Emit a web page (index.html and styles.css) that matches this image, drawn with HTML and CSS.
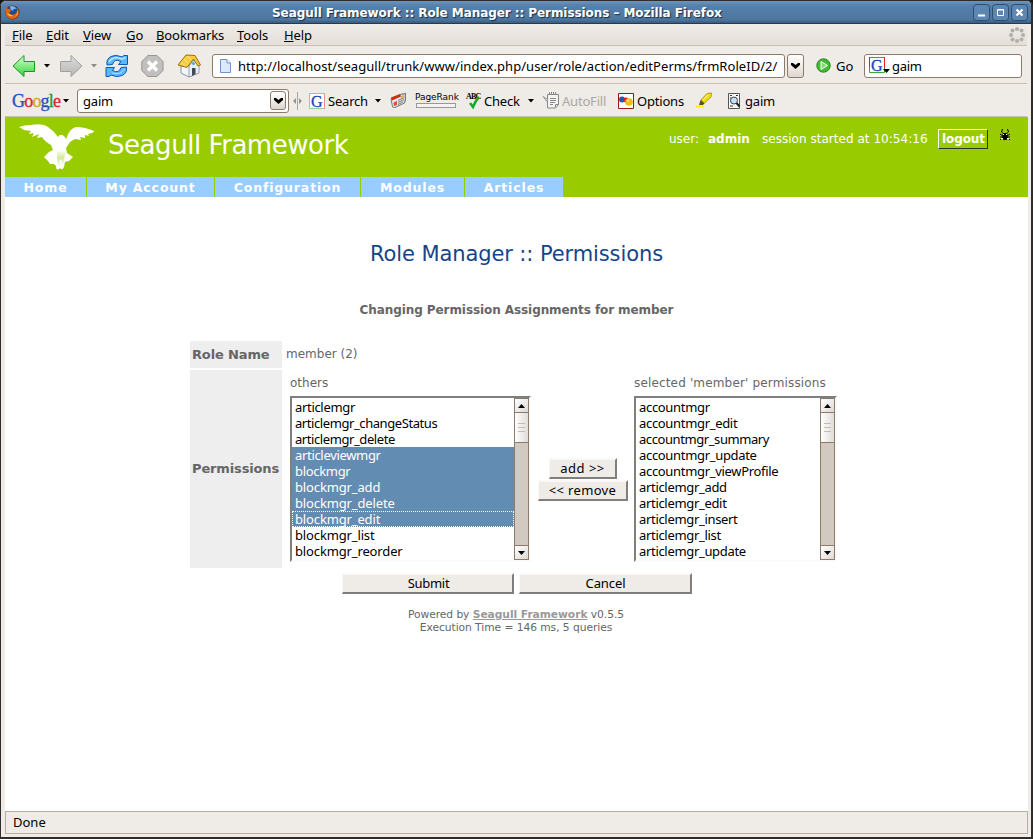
FILE: index.html
```html
<!DOCTYPE html>
<html lang="en">
<head>
<meta charset="utf-8">
<title>Seagull Framework :: Role Manager :: Permissions - Mozilla Firefox</title>
<link rel="stylesheet" href="styles.css">
</head>
<body>
<div class="window">
  <header class="titlebar">
    <svg class="fox" width="15" height="15" viewBox="0 0 15 15"><circle cx="7.500" cy="7.500" r="7" fill="#732b08"/><circle cx="7.800" cy="6.400" r="5.400" fill="#1f4a97"/><path d="M5 1.500Q9 0 12 4Q8 3 8 6Q5 5 5 1.500" fill="#78b9ec"/><path d="M1 2L3 4L5 4L6 6L4 8Q6 11 10 9Q13 7 12 3Q16 9 11 13Q5 16 1 10Q0 6 1 2" fill="#e5600d"/><path d="M12 3Q15 9 10 12Q14 7 12 3M2 8Q4 12 8 11" fill="#ffd23c"/></svg>
    <h1 class="titletext">Seagull Framework :: Role Manager :: Permissions – Mozilla Firefox</h1>
    <div class="winbtns">
      <svg width="17" height="17"><rect x=".5" y=".5" width="16" height="16" rx="3" class="wb"/><path d="M5 11.500h7" stroke="#fff" stroke-width="2"/></svg>
      <svg width="17" height="17"><rect x=".5" y=".5" width="16" height="16" rx="3" class="wb"/><path d="M5.500 5.500h6v6h-6zM5 6h7" stroke="#fff" fill="none"/></svg>
      <svg width="17" height="17"><rect x=".5" y=".5" width="16" height="16" rx="3" class="wb"/><path d="M5.500 5.500l6 6m0-6l-6 6" stroke="#fff" stroke-width="2.200"/></svg>
    </div>
  </header>
  <nav class="menubar">
    <span><u>F</u>ile</span><span><u>E</u>dit</span><span><u>V</u>iew</span><span><u>G</u>o</span><span><u>B</u>ookmarks</span><span><u>T</u>ools</span><span><u>H</u>elp</span>
    <svg width="18" height="18" fill="#b2afaa"><circle cx="9" cy="3" r="2"/><circle cx="13.500" cy="4.500" r="2"/><circle cx="15" cy="9" r="2"/><circle cx="13.500" cy="13.500" r="2"/><circle cx="9" cy="15" r="2"/><circle cx="4.500" cy="13.500" r="2"/><circle cx="3" cy="9" r="2"/><circle cx="4.500" cy="4.500" r="2"/></svg>
  </nav>
  <div class="navbar">
    <svg width="24" height="24"><defs><linearGradient id="gr" x2="0" y2="1"><stop stop-color="#d8ffd0"/><stop offset="1" stop-color="#35d53a"/></linearGradient><linearGradient id="gy" x2="0" y2="1"><stop stop-color="#dedddd"/><stop offset="1" stop-color="#b6b4b3"/></linearGradient></defs><path d="M1 12L12 1.500V7.500H22.500V17.500H12V22.500Z" fill="url(#gr)" stroke="#149b1c"/></svg>
    <svg width="6" height="4"><path d="M0 0h6L3 3.500z"/></svg>
    <svg width="24" height="24"><path d="M22 12L11 1.500V7.500H.5V17.500H11V22.500Z" fill="url(#gy)" stroke="#a3a19f"/></svg>
    <svg width="6" height="4"><path d="M0 0h6L3 3.500z" fill="#8d8a87"/></svg>
    <svg width="24" height="24" fill="#5bb9fb" stroke="#0759b8"><path d="M2 11Q1 5 6 2.500Q11 0 17 3L19 1.500H22.500V10.500H13.500L16 7.500Q9 4 7.500 10.500Z"/><path d="M21.500 13Q22.500 19 17 21.500Q12 24 6 21L4 22.500H1V13.500H9.500L7.500 16.500Q14 20 16 13.500Z"/><path d="M4 8Q8 1.500 17 5L20.500 3.500" fill="none" stroke="#b9e5ff" stroke-width="1.500"/><path d="M19.500 15Q16 21.500 7 19" fill="none" stroke="#a9dfff"/></svg>
    <svg width="23" height="24"><path d="M7 1.500H16L22 7.500V16.500L16 22.500H7L.8 16.500V7.500Z" fill="#c1c0bf" stroke="#989695"/><path d="M7 7.500l9 9m0-9l-9 9" stroke="#fff" stroke-width="3.500"/></svg>
    <svg width="25" height="25"><path d="M4 13L13 8L21 13V20L12 24L4 20Z" fill="#f4f6fb" stroke="#8b91a0"/><path d="M12 24V13L17 7L22 13V20L12 24Z" fill="#e7effa" stroke="#999eaa"/><path d="M1 12L9 2L18 2.500L23.500 12L21 13L16.500 6L10 14.500Z" fill="#f4cd43" stroke="#9a6d09"/><path d="M7 6L11 10M4 9L8 13M10 3L14 7" stroke="#ffe988"/><path d="M15 15h3.500v6l-3.500 2z" fill="#414956"/><circle cx="16.500" cy="10.500" r="1.500" fill="#4caadd"/></svg>
    <div class="field url"><svg width="13" height="16"><path d="M1.500 1.500H8L11.500 5V14.500H1.500Z" fill="#dbe9ff" stroke="#7591c8"/><path d="M8 1.500V5H11.500" fill="#fff" stroke="#7591c8"/></svg><span>http://localhost/seagull/trunk/www/index.php/user/role/action/editPerms/frmRoleID/2/</span></div>
    <div class="drop tall"><svg width="9" height="6"><path d="M0 0H2L4.500 2L7 0H9V2L4.500 6L0 2Z"/></svg></div>
    <svg width="15" height="15"><circle cx="7.500" cy="7.500" r="6.700" fill="#45ba37" stroke="#23881e"/><path d="M5 3.500L11.500 7.500L5 11.500Z" fill="#7fdc70" stroke="#fff"/></svg>
    <span>Go</span>
    <div class="field find"><svg width="21" height="19"><g transform="translate(0 1)"><path d="M.5.5h15v15H.5z" fill="#fff" stroke="#36a936"/><path d="M15.500 0v11" stroke="#e22"/><path d="M.5 0v10" stroke="#35c"/><text x="2" y="13.500" class="g">G</text><path d="M14 12h7l-3.500 4z"/></g></svg><span>gaim</span></div>
  </div>
  <div class="googlebar">
    <span class="glogo"><i class="b">G</i><i class="r">o</i><i class="y">o</i><i class="b">g</i><i class="gn">l</i><i class="r">e</i></span>
    <svg width="6" height="4"><path d="M0 0h6L3 3.500z"/></svg>
    <div class="field combo"><span>gaim</span><div class="drop"><svg width="9" height="6"><path d="M0 0H2L4.500 2L7 0H9V2L4.500 6L0 2Z"/></svg></div></div>
    <svg width="10" height="18"><path d="M4.500 0v18" stroke="#aaa7a3"/><path d="M0 9L3 6v6zM9 9L6 6v6z" fill="#96938f"/></svg>
    <svg width="16" height="20"><g transform="translate(0 2)"><path d="M.5.5h15v15H.5z" fill="#fff" stroke="#92cf96"/><path d="M15.500 0v16" stroke="#ef9090"/><path d="M0 .5h16" stroke="#92b9ec"/><text x="2" y="13.500" class="g">G</text></g></svg>
    <span>Search</span>
    <svg width="6" height="4"><path d="M0 0h6L3 3.500z"/></svg>
    <svg width="17" height="17"><path d="M1 6.500L13 1.500L14.500 11L5 15.500L2.500 15Z" fill="#e8e8e8" stroke="#777"/><path d="M13 2.500L15.500 1V8L14.500 11" fill="#ccc" stroke="#777"/><path d="M1 5.500L10 2L11 4.500L2 8.500Z" fill="#d52a16"/><path d="M3.500 10.500l3.500-1.500v4l-3 1z" fill="#e34a35"/><path d="M8 8.500l5-2.500M8 10.500l5-2.500M8 12.500l5-2.500" stroke="#777"/><path d="M11 4l2-1v2l-2 1z" fill="#e8b020"/></svg>
    <span class="rank"><b>PageRank</b><i></i></span>
    <svg width="16" height="17"><text x="0" y="7" class="abc" textLength="15">ABC</text><path d="M4 11L7 15Q10 8 13 5" stroke="#17a92f" stroke-width="2.500" fill="none"/></svg>
    <span>Check</span>
    <svg width="6" height="4"><path d="M0 0h6L3 3.500z"/></svg>
    <svg width="17" height="17"><path d="M4.500 2.500h11v10l-3 3.500h-8z" fill="#f4f3f2" stroke="#888"/><path d="M6.500 0v3M8.500 0v3M10.500 0v3M12.500 0v3M7 6.500h6M7 8.500h6M7 10.500h5M7 12.500h3M12.500 15.500v-3h3" stroke="#888" fill="none"/><path d="M0 4.500l4 5 .5-2z" fill="#ddd" stroke="#999"/></svg>
    <span class="off">AutoFill</span>
    <svg width="16" height="16"><path d="M.5.5h15v15H.5z" fill="#fff" stroke="#9b1717"/><circle cx="4" cy="6.500" r="3" fill="#2457b1"/><circle cx="8" cy="7" r="2.500" fill="#d82020"/><circle cx="11" cy="9" r="3.800" fill="#f1bd19"/><circle cx="10" cy="7.500" r="1" fill="#fff0a0"/></svg>
    <span>Options</span>
    <svg width="17" height="17"><path d="M0 14.500h8" stroke="#fff000" stroke-width="2"/><path d="M5 8L11 1.500L15.500 1L15 5L8.500 11Z" fill="#f1df13" stroke="#b89f00"/><path d="M4.500 8L8.500 11.500L7 13H3Z" fill="#5c5423"/><path d="M12 3L7 8" stroke="#fff79b"/></svg>
    <svg width="14" height="16"><path d="M1.500.5h11v15h-11z" fill="#f8f8f8" stroke="#555"/><path d="M3 2.500h2M3 5h1M3 8h1M3 13h3M11 2.500h-2" stroke="#333"/><circle cx="7" cy="7.500" r="3.500" fill="#c2e2fb" stroke="#444"/><path d="M9.500 10l3 3.500" stroke="#222" stroke-width="2"/></svg>
    <span>gaim</span>
  </div>
  <main class="page">
    <div class="banner">
      <svg width="76" height="47" viewBox="0 0 76 47"><defs><linearGradient id="tail" x2="0" y2="1"><stop stop-color="#fff"/><stop offset=".45" stop-color="#d3e99b"/><stop offset="1" stop-color="#fff"/></linearGradient></defs><path fill="#fff" d="M0 3Q5 1 12 1Q23 -1 29 3Q35 7 39 13Q41 9 45 12L47 15Q51 4 57 3Q66 3 75 7Q75 9 69 10L70 12L66 11L66 14L61 13L62 16L56 15L51 18L47 24L48 29L54 33L50 37L46 38L45 43Q43 47 41 44L40 45Q37 47 37 42L35 40L31 40L29 37L25 33L30 28L34 26L32 21Q25 17 23 13L18 14L20 10L13 13L15 9L10 10L12 7L5 6Z"/><path d="M38 26h9l-2 10l-1 7h-1.500V36h-1.500v7h-2l-1-8z" fill="url(#tail)"/></svg>
      <div class="brand">Seagull Framework</div>
      <div class="session"><span class="usr">user:</span><b>admin</b><span class="started">session started at 10:54:16</span></div>
      <div class="logout">logout</div>
      <svg class="bug" width="11" height="12"><path d="M2.500 0L1.500 3L4 5M7.500 0L8.500 3L6 5M0 5L3 7M10 5L7 7M0 11L3 8M10 11L7 8M0 8h10" stroke="#000" fill="none"/><path d="M4 4h2v1h1.500v4l-1 2H3.500L2.500 9V5H4z"/><path d="M3 5h1v1H3zM6 5h1v1H6zM1 9h2v1H1zM7 9h2v1H7z" fill="#fff"/></svg>
    </div>
    <nav class="tabs"><span>Home</span><span>My Account</span><span>Configuration</span><span>Modules</span><span>Articles</span></nav>
    <h2>Role Manager :: Permissions</h2>
    <h3>Changing Permission Assignments for member</h3>
    <div class="form">
      <div class="label"><span>Role Name</span></div><div class="value">member (2)</div>
      <div class="label"><span>Permissions</span></div>
      <div class="lists">
        <div class="col first"><div class="cap">others</div>
          <div class="list"><div class="opts"><div>articlemgr</div><div class="tight">articlemgr_changeStatus</div><div class="tight">articlemgr_delete</div><div class="sel">articleviewmgr</div><div class="sel">blockmgr</div><div class="sel loose">blockmgr_add</div><div class="sel loose">blockmgr_delete</div><div class="sel focus loose">blockmgr_edit</div><div class="loose">blockmgr_list</div><div class="loose">blockmgr_reorder</div></div>
          <div class="scroll"><div class="sb"><svg width="7" height="4"><path d="M0 4h7L3.500 0z"/></svg></div><div class="thumb"><i></i><i></i><i></i></div><div class="sb end"><svg width="7" height="4"><path d="M0 0h7L3.500 4z"/></svg></div></div></div></div>
        <div class="move"><div class="btn add">add &gt;&gt;</div><div class="btn remove">&lt;&lt; remove</div></div>
        <div class="col second"><div class="cap wide">selected 'member' permissions</div>
          <div class="list"><div class="opts"><div>accountmgr</div><div>accountmgr_edit</div><div class="tight">accountmgr_summary</div><div>accountmgr_update</div><div>accountmgr_viewProfile</div><div>articlemgr_add</div><div>articlemgr_edit</div><div>articlemgr_insert</div><div>articlemgr_list</div><div>articlemgr_update</div></div>
          <div class="scroll"><div class="sb"><svg width="7" height="4"><path d="M0 4h7L3.500 0z"/></svg></div><div class="thumb"><i></i><i></i><i></i></div><div class="sb end"><svg width="7" height="4"><path d="M0 0h7L3.500 4z"/></svg></div></div></div></div>
      </div>
    </div>
    <div class="actions"><div class="btn submit">Submit</div><div class="btn cancel">Cancel</div></div>
    <footer>Powered by <a>Seagull Framework</a> v0.5.5<br>Execution Time = 146 ms, 5 queries</footer>
  </main>
  <div class="status">Done</div>
</div>
</body>
</html>
```
FILE: styles.css
```css
* { box-sizing: border-box; }
body { margin: 0; background: #161616; font: 13px/16px "Noto Sans", sans-serif; color: #000; overflow: hidden; }
svg { display: block; flex: none; overflow: visible; }
.window { width: 1033px; height: 839px; border: 1px solid #302c2b; border-right-width: 2px; border-bottom-width: 2px; border-radius: 6px 6px 0 0; background: #efebe7; overflow: hidden; display: flex; flex-direction: column; }
.titlebar { height: 23px; flex: none; background: linear-gradient(#7094ba, #5681ad 20%, #4d769f 85%, #385b7e); border-bottom: 1px solid #233b55; display: grid; grid-template-columns: 20px 1fr 60px; align-items: center; padding: 0 3px 0 4px; }
.titletext { margin: 0; color: #fff; font: bold 12px/20px "DejaVu Sans", sans-serif; letter-spacing: -.07px; white-space: nowrap; padding: 1px 0 0 247px; text-shadow: 1px 1px 1px #182c40; }
.winbtns { display: flex; gap: 2px; margin-left: 5px; }
.wb { fill: #5d87b1; stroke: #2b4d70; }
.menubar { height: 22px; flex: none; margin: 0 4px; padding-left: 7px; display: grid; grid-template-columns: 34px 37px 43px 30px 81px 47px 724px 20px; align-items: center; background: linear-gradient(#efebe7, #e4dfd9); border-bottom: 1px solid #cbbfb3; white-space: nowrap; letter-spacing: -.1px; }
.navbar { height: 38px; flex: none; margin: 0 4px; padding: 2px 0 0 7px; display: grid; grid-template-columns: 32px 16px 31px 14px 36px 36px 35px 575px 29px 20px 28px 158px; align-items: center; border-bottom: 1px solid #cbbfb3; }
.field { display: flex; align-items: center; height: 24px; border: 1px solid #8c7b6b; border-radius: 3px; background: #fff; }
.url { width: 573px; padding-left: 6px; }
.url span { margin-left: 6px; letter-spacing: .05px; white-space: nowrap; }
.drop { width: 16px; height: 19px; display: flex; align-items: center; justify-content: center; border: 1px solid #8c7b6b; border-radius: 3px; background: linear-gradient(#fff, #ded7d0); }
.tall { width: 17px; height: 24px; }
.find { padding-left: 4px; }
.find span { margin-left: 2px; letter-spacing: -.3px; }
.g { font: 16px "Liberation Serif", serif; fill: #1b43bc; stroke: #1b43bc; stroke-width: .3px; }
.abc { font: bold 8px "Liberation Serif", serif; }
.googlebar { height: 33px; flex: none; margin: 0 4px; padding: 1px 0 0 7px; display: grid; grid-template-columns: 51px 14px 216px 16px 19px 47px 15px 25px 51px 18px 44px 15px 19px 56px 19px 59px 31px 18px 40px; align-items: center; border-bottom: 1px solid #cbbfb3; white-space: nowrap; letter-spacing: -.2px; }
.glogo { font: 18px/20px "Liberation Serif", serif; letter-spacing: -.8px; }
.glogo i { font-style: normal; -webkit-text-stroke: .35px; }
.b { color: #2851c4; } .r { color: #d32a2e; } .y { color: #d5a716; } .gn { color: #259b40; }
.combo { width: 212px; justify-content: space-between; padding: 0 2px 0 5px; }
.rank { display: block; width: 44px; height: 17px; }
.rank b { display: block; font: 9px/10px "DejaVu Sans", sans-serif; letter-spacing: -.05px; }
.rank i { display: block; width: 40px; height: 5px; border: 1px solid #999; margin: 1px 0 0 1px; background: #f5f3f1; }
.off { color: #aaa7a4; }
.page { flex: 1; margin: 0 3px 0 4px; width: 1023px; background: #fff; color: #666; font-family: "DejaVu Sans", sans-serif; }
.banner { height: 60px; background: #9c0; color: #fff; display: grid; grid-template-columns: 89px 560px 269px 61px 20px; padding-left: 14px; align-items: start; white-space: nowrap; }
.banner > svg { margin-top: 7px; }
.brand { font-size: 26px; line-height: 34px; padding-top: 11px; letter-spacing: -.45px; }
.session { display: flex; font-size: 12px; padding-top: 14px; padding-left: 1px; }
.session b { width: 54px; }
.usr { width: 39px; }
.started { letter-spacing: .03px; }
.logout { width: 50px; height: 20px; margin: 12px 0 0 1px; padding: 1px 3px; border: 1px solid; border-color: #fff #333 #333 #fff; font-size: 12px; font-weight: bold; letter-spacing: -.1px; }
.banner .bug { margin: 12px 0 0 2px; }
.tabs { height: 20px; background: #9c0; color: #fff; font: bold 12.5px/20px "DejaVu Sans", sans-serif; letter-spacing: .85px; display: grid; grid-template-columns: 81px 127px 145px 103px 98px; gap: 1px; text-align: center; }
.tabs span { background: #9cf; height: 20px; padding-top: 1px; }
h2 { margin: 43px 0 0; font: 21px/28px "DejaVu Sans", sans-serif; letter-spacing: -.1px; color: #14458b; text-align: center; }
h3 { margin: 34px 0 23px; font: bold 12px/16px "DejaVu Sans", sans-serif; letter-spacing: -.08px; text-align: center; }
.form { width: 650px; margin-left: 185px; display: grid; grid-template-columns: 92px 1fr; grid-template-rows: 27px 198px; row-gap: 2px; }
.label { background: #eee; font-weight: bold; letter-spacing: -.14px; display: flex; align-items: center; padding-left: 2px; }
.value { font-size: 12px; padding: 5px 4px; }
.lists { display: grid; grid-template-columns: 241px 103px 203px; margin-left: 8px; align-items: start; }
.cap { height: 26px; line-height: 26px; font-size: 12px; white-space: nowrap; }
.wide { letter-spacing: .16px; }
.list { height: 166px; border: 2px solid; border-color: #7f7f7f #fafafa #fafafa #7f7f7f; display: flex; background: #fff; color: #000; font: 13px/16px "Noto Sans", sans-serif; letter-spacing: -.32px; }
.opts { flex: 1; padding-top: 1px; }
.opts div { padding-left: 3px; height: 16px; line-height: 17px; }
.opts .sel { background: #628cb2; color: #fff; }
.opts .tight { letter-spacing: -.42px; }
.opts .loose { letter-spacing: -.14px; }
.focus { outline: 1px dotted #fff; outline-offset: -1px; }
.scroll { width: 15px; background: #d2c9c0; border: solid #8c7b6b; border-width: 0 1px; display: flex; flex-direction: column; }
.sb { height: 15px; border: solid #8c7b6b; border-width: 1px 0; background: linear-gradient(135deg, #fff, #ddd8d3); display: grid; place-items: center; }
.end { margin-top: auto; }
.thumb { height: 30px; background: linear-gradient(90deg, #fff, #e0dcd7); border-bottom: 1px solid #8c7b6b; display: flex; flex-direction: column; justify-content: center; align-items: center; gap: 3px; }
.thumb i { width: 7px; height: 1px; background: #c4bbb1; }
.move { padding: 88px 0 0 7px; display: flex; flex-direction: column; align-items: center; width: 97px; gap: 1px; }
.btn { height: 21px; border: 2px solid; border-color: #faf9f7 #7f7f7f #7f7f7f #faf9f7; border-left-width: 1px; background: #efebe7; color: #000; text-align: center; font: 13px/16px "Noto Sans", sans-serif; white-space: nowrap; }
.add { width: 68px; letter-spacing: .5px; } .remove { width: 90px; letter-spacing: .35px; }
.actions { display: flex; gap: 5px; margin: 5px 0 0 337px; }
.submit { width: 172px; letter-spacing: -.3px; padding-left: 2px; } .cancel { width: 173px; letter-spacing: -.1px; padding-left: 1px; }
footer { margin-top: 14px; text-align: center; font-size: 10.700px; line-height: 13px; letter-spacing: -.05px; padding-right: 1px; }
footer a { color: #999; font-weight: bold; text-decoration: underline; }
.status { height: 23px; flex: none; margin: 0 3px 3px 4px; border: 1px solid #b9ada1; padding-left: 7px; line-height: 21px; }
```
